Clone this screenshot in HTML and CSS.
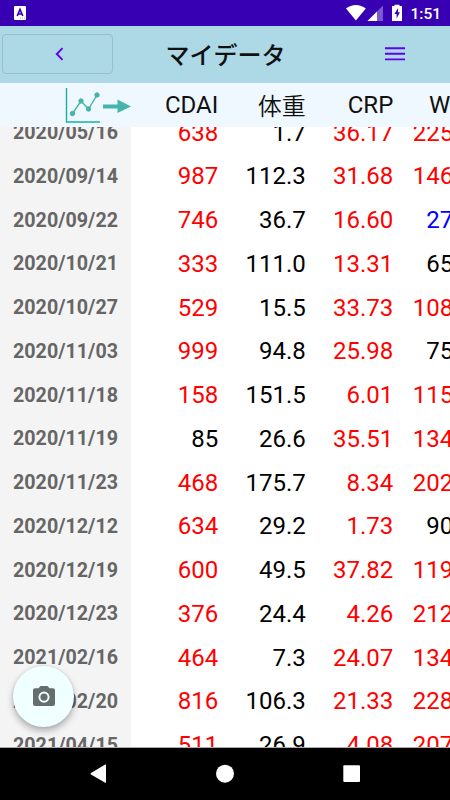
FILE: index.html
```html
<!DOCTYPE html>
<html lang="ja">
<head>
<meta charset="utf-8">
<title>マイデータ</title>
<link rel="stylesheet" href="styles.css">
</head>
<body>
<div class="screen">
  <div class="status">
    <svg class="app-mark" width="12" height="14" viewBox="0 0 12 14"><rect width="12" height="14" rx="1" fill="#fff"/><path d="M3.2 10 6 3.4 8.8 10M4.3 8h3.4" fill="none" stroke="#3700b3" stroke-width="1.6"/><path d="M6 12.2h5" stroke="#aaa" stroke-dasharray="1 1"/></svg>
    <div class="status-right">
      <svg width="57" height="18" viewBox="0 0 57 18"><path d="M0 4.6C5.6-.1 14.2-.1 19.8 4.6L9.9 16.4Z" fill="#fff"/><path d="M21.5 17 37 1.5V17Z" fill="#7d58cc"/><path d="M21.5 17 31 7.5V17Z" fill="#fff"/><path d="M46 2h2.5V.8h5V2H56v15H46Z" fill="#fff"/><path d="M52.1 4 48.4 10h2.2v4.5l3.3-6.3h-2Z" fill="#3700b3"/></svg>
      <span class="clock">1:51</span>
    </div>
  </div>
  <header class="bar">
    <button class="back" aria-label="戻る"><svg width="9" height="14" viewBox="0 0 9 14"><path d="M7.5 1.2 1.8 7l5.7 5.8" fill="none" stroke="#6200ee" stroke-width="1.9"/></svg></button>
    <h1>マイデータ</h1>
    <svg class="menu" width="20" height="14" viewBox="0 0 20 14"><path d="M0 1.200h20M0 6.800h20M0 12.400h20" stroke="#6200ee" stroke-width="1.9"/></svg>
  </header>
  <div class="head">
    <div class="chart"><svg width="68" height="37" viewBox="0 0 68 37"><path d="M1.5 1v34H35" fill="none" stroke="#16b0a4" stroke-width="1.4"/><g fill="#45b4aa" stroke="#45b4aa"><path d="M7.500 26.500 16 14l7.500 8L32 8" fill="none" stroke-width="1.4"/><circle cx="7.5" cy="26.5" r="2.2"/><circle cx="16" cy="14" r="2.2"/><circle cx="23.5" cy="22" r="2.2"/><circle cx="32" cy="8" r="2.2"/><path d="M38 17.500h14.500v-5L66 19.500l-13.500 6.500v-4.500H38Z" stroke="none"/></g></svg></div>
    <span>CDAI</span><span class="cjk">体重</span><span>CRP</span><span class="wbc">W</span>
  </div>
  <main class="rows">
    <div class="row"><b>2020/05/16</b><i class="hi">638</i><i>1.7</i><i class="hi">36.17</i><i class="hi">225</i></div>
    <div class="row"><b>2020/09/14</b><i class="hi">987</i><i>112.3</i><i class="hi">31.68</i><i class="hi">146</i></div>
    <div class="row"><b>2020/09/22</b><i class="hi">746</i><i>36.7</i><i class="hi">16.60</i><i class="lo">27</i></div>
    <div class="row"><b>2020/10/21</b><i class="hi">333</i><i>111.0</i><i class="hi">13.31</i><i>65</i></div>
    <div class="row"><b>2020/10/27</b><i class="hi">529</i><i>15.5</i><i class="hi">33.73</i><i class="hi">108</i></div>
    <div class="row"><b>2020/11/03</b><i class="hi">999</i><i>94.8</i><i class="hi">25.98</i><i>75</i></div>
    <div class="row"><b>2020/11/18</b><i class="hi">158</i><i>151.5</i><i class="hi">6.01</i><i class="hi">115</i></div>
    <div class="row"><b>2020/11/19</b><i>85</i><i>26.6</i><i class="hi">35.51</i><i class="hi">134</i></div>
    <div class="row"><b>2020/11/23</b><i class="hi">468</i><i>175.7</i><i class="hi">8.34</i><i class="hi">202</i></div>
    <div class="row"><b>2020/12/12</b><i class="hi">634</i><i>29.2</i><i class="hi">1.73</i><i>90</i></div>
    <div class="row"><b>2020/12/19</b><i class="hi">600</i><i>49.5</i><i class="hi">37.82</i><i class="hi">119</i></div>
    <div class="row"><b>2020/12/23</b><i class="hi">376</i><i>24.4</i><i class="hi">4.26</i><i class="hi">212</i></div>
    <div class="row"><b>2021/02/16</b><i class="hi">464</i><i>7.3</i><i class="hi">24.07</i><i class="hi">134</i></div>
    <div class="row"><b>2021/02/20</b><i class="hi">816</i><i>106.3</i><i class="hi">21.33</i><i class="hi">228</i></div>
    <div class="row"><b>2021/04/15</b><i class="hi">511</i><i>26.9</i><i class="hi">4.08</i><i class="hi">207</i></div>
  </main>
  <nav class="nav">
    <svg width="450" height="52" viewBox="0 0 450 52" fill="#fff"><path d="M106 17v17.200q0 .9-.8.5L91 26.600q-1-.8 0-1.600l14.200-8.500q.8-.4.8.5Z"/><circle cx="225" cy="25.700" r="9"/><rect x="343.300" y="17.300" width="16.700" height="16.700" rx="1"/></svg>
  </nav>
  <button class="fab" aria-label="カメラ"><svg width="22" height="20" viewBox="0 0 22 20"><path fill="#666d6d" fill-rule="evenodd" d="M7.500 0h7l2 2.200H20a2 2 0 0 1 2 2V18a2 2 0 0 1-2 2H2a2 2 0 0 1-2-2V4.200a2 2 0 0 1 2-2h3.500ZM11 5.500a5.600 5.600 0 1 0 0 11.200a5.600 5.600 0 0 0 0-11.200Z"/><circle cx="11" cy="11.100" r="3.600" fill="#666d6d"/></svg></button>
</div>
</body>
</html>
```
FILE: styles.css
```css
* { box-sizing: border-box; }
body { margin: 0; background: #fff; font-family: Roboto, "Noto Sans CJK JP", sans-serif; }
svg { display: block; flex: none; }
button { padding: 0; font: inherit; }

.screen {
  position: relative;
  display: flex;
  flex-direction: column;
  width: 450px;
  height: 800px;
  overflow: hidden;
}

.status {
  flex: none;
  display: flex;
  align-items: center;
  justify-content: space-between;
  height: 26px;
  padding: 0 9px 0 14px;
  background: #3700b3;
}
.status-right { display: flex; align-items: center; gap: 7px; }
.clock { color: #fff; font-size: 15.5px; font-weight: 500; line-height: 26px; padding-top: 2px; }

.bar {
  flex: none;
  display: grid;
  grid-template-columns: 115px 1fr 110px;
  align-items: center;
  height: 57px;
  background: #add8e6;
}
.back {
  display: grid;
  place-items: center;
  width: 111px;
  height: 40px;
  margin: -2px 0 0 2px;
  padding-left: 3px;
  background: transparent;
  border: 1px solid #98bfcd;
  border-radius: 4px;
}
h1 { margin: -2px 0 0; padding-right: 4px; text-align: center; font-size: 24px; line-height: 36px; font-weight: 500; font-family: "Noto Sans CJK JP", sans-serif; color: #111; }
.menu { justify-self: center; margin-top: -1px; }

.head, .row {
  display: grid;
  grid-template-columns: 131px 87.300px 87.500px 87.500px 60px;
  align-items: center;
  text-align: right;
  font-size: 24px;
  white-space: nowrap;
}
.head { flex: none; height: 43.5px; background: #f0f8ff; color: #111; }
.head span { padding-top: 1px; }
.chart { padding: 2px 0 0 65px; }
.head .cjk { font-family: "Noto Sans CJK JP", sans-serif; font-weight: 350; line-height: 36px; padding: 0; }
.head .wbc { padding-right: 3px; }

.rows {
  flex: 1;
  min-height: 0;
  overflow: hidden;
  background: linear-gradient(90deg, #f4f4f4 131px, #fff 131px);
}
.row { height: 43.75px; }
.row:first-child { margin-top: -15.7px; }
.row b { padding-right: 13px; font-size: 19.7px; color: #666; }
.row i { font-style: normal; color: #000; }
.row .hi { color: #f00; }
.row .lo { color: #00f; }

.nav { flex: none; height: 53px; background: #000; border-top: 1px solid #aaa; }

.fab {
  position: absolute;
  left: 13px;
  top: 666px;
  display: grid;
  place-items: center;
  width: 61px;
  height: 61px;
  padding-bottom: 2px;
  border: 0;
  border-radius: 50%;
  background: #f0ffff;
  box-shadow: 0 4px 7px rgba(0, 0, 0, .28), 0 0 3px rgba(0, 0, 0, .12);
}
```
